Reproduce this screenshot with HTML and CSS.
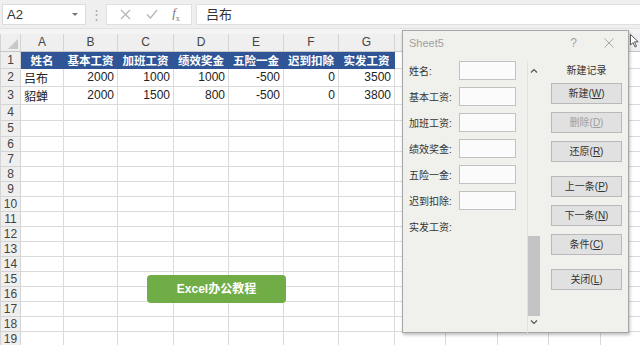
FILE: index.html
```html
<!DOCTYPE html>
<html>
<head>
<meta charset="utf-8">
<title>Sheet5</title>
<link rel="stylesheet" href="styles.css">
</head>
<body>

<div class="fbar">
  <div class="namebox"><span>A2</span><span class="caret"></span></div>
  <div class="grip">&#8942;</div>
  <div class="fxbox">
    <svg width="11" height="11" viewBox="0 0 11 11"><path d="M1 1L10 10M10 1L1 10" stroke="#b4b4b4" stroke-width="1.2" fill="none"/></svg>
    <svg width="12" height="10" viewBox="0 0 12 10"><path d="M1 5.5L4.5 9L11 1" stroke="#b4b4b4" stroke-width="1.2" fill="none"/></svg>
    <span class="fx"><i>f</i><sub>x</sub></span>
  </div>
  <div class="formula">吕布</div>
</div>
<div class="band"></div>

<table class="sheet">
  <colgroup>
    <col class="c-rh"><col class="c-a"><col class="c-b"><col class="c-c"><col class="c-d"><col class="c-e"><col class="c-f"><col class="c-g"><col class="c-h"><col class="c-i"><col class="c-j"><col class="c-k"><col class="c-l">
  </colgroup>
  <tr class="colhead">
    <th class="corner"><span class="tri"></span></th><th>A</th><th>B</th><th>C</th><th>D</th><th>E</th><th>F</th><th>G</th><th></th><th></th><th></th><th></th><th></th>
  </tr>
  <tr class="tall">
    <th>1</th><td class="hd">姓名</td><td class="hd">基本工资</td><td class="hd">加班工资</td><td class="hd">绩效奖金</td><td class="hd">五险一金</td><td class="hd">迟到扣除</td><td class="hd">实发工资</td><td></td><td></td><td></td><td></td><td></td>
  </tr>
  <tr class="tall">
    <th>2</th><td>吕布</td><td class="n">2000</td><td class="n">1000</td><td class="n">1000</td><td class="n">-500</td><td class="n">0</td><td class="n">3500</td><td></td><td></td><td></td><td></td><td></td>
  </tr>
  <tr class="tall">
    <th>3</th><td>貂蝉</td><td class="n">2000</td><td class="n">1500</td><td class="n">800</td><td class="n">-500</td><td class="n">0</td><td class="n">3800</td><td></td><td></td><td></td><td></td><td></td>
  </tr>
  <tr class="tall"><th>4</th><td></td><td></td><td></td><td></td><td></td><td></td><td></td><td></td><td></td><td></td><td></td><td></td></tr>
  <tr class="tall"><th>5</th><td></td><td></td><td></td><td></td><td></td><td></td><td></td><td></td><td></td><td></td><td></td><td></td></tr>
  <tr><th>6</th><td></td><td></td><td></td><td></td><td></td><td></td><td></td><td></td><td></td><td></td><td></td><td></td></tr>
  <tr><th>7</th><td></td><td></td><td></td><td></td><td></td><td></td><td></td><td></td><td></td><td></td><td></td><td></td></tr>
  <tr><th>8</th><td></td><td></td><td></td><td></td><td></td><td></td><td></td><td></td><td></td><td></td><td></td><td></td></tr>
  <tr><th>9</th><td></td><td></td><td></td><td></td><td></td><td></td><td></td><td></td><td></td><td></td><td></td><td></td></tr>
  <tr><th>10</th><td></td><td></td><td></td><td></td><td></td><td></td><td></td><td></td><td></td><td></td><td></td><td></td></tr>
  <tr><th>11</th><td></td><td></td><td></td><td></td><td></td><td></td><td></td><td></td><td></td><td></td><td></td><td></td></tr>
  <tr><th>12</th><td></td><td></td><td></td><td></td><td></td><td></td><td></td><td></td><td></td><td></td><td></td><td></td></tr>
  <tr><th>13</th><td></td><td></td><td></td><td></td><td></td><td></td><td></td><td></td><td></td><td></td><td></td><td></td></tr>
  <tr><th>14</th><td></td><td></td><td></td><td></td><td></td><td></td><td></td><td></td><td></td><td></td><td></td><td></td></tr>
  <tr><th>15</th><td></td><td></td><td></td><td></td><td></td><td></td><td></td><td></td><td></td><td></td><td></td><td></td></tr>
  <tr><th>16</th><td></td><td></td><td></td><td></td><td></td><td></td><td></td><td></td><td></td><td></td><td></td><td></td></tr>
  <tr><th>17</th><td></td><td></td><td></td><td></td><td></td><td></td><td></td><td></td><td></td><td></td><td></td><td></td></tr>
  <tr><th>18</th><td></td><td></td><td></td><td></td><td></td><td></td><td></td><td></td><td></td><td></td><td></td><td></td></tr>
  <tr><th>19</th><td></td><td></td><td></td><td></td><td></td><td></td><td></td><td></td><td></td><td></td><td></td><td></td></tr>
  <tr><th>20</th><td></td><td></td><td></td><td></td><td></td><td></td><td></td><td></td><td></td><td></td><td></td><td></td></tr>
</table>

<!-- floating things over the sheet -->
<div class="promo">Excel办公教程</div>

<div class="dialog">
  <div class="dlg-title">
    <span>Sheet5</span>
    <span class="help">?</span>
    <svg class="close" width="10" height="10" viewBox="0 0 10 10"><path d="M0.5 0.5L9.5 9.5M9.5 0.5L0.5 9.5" stroke="#a8a8a8" stroke-width="1" fill="none"/></svg>
  </div>
  <div class="dlg-body">
    <div class="fields">
      <div class="field"><label>姓名:</label><div class="input"></div></div>
      <div class="field"><label>基本工资:</label><div class="input"></div></div>
      <div class="field"><label>加班工资:</label><div class="input"></div></div>
      <div class="field"><label>绩效奖金:</label><div class="input"></div></div>
      <div class="field"><label>五险一金:</label><div class="input"></div></div>
      <div class="field"><label>迟到扣除:</label><div class="input"></div></div>
      <div class="field"><label>实发工资:</label></div>
    </div>
    <div class="scroll">
      <svg width="8" height="5" viewBox="0 0 8 5"><path d="M1 4.5L4 1.5L7 4.5" stroke="#555" stroke-width="1.2" fill="none"/></svg>
      <div class="thumb"></div>
      <svg width="8" height="5" viewBox="0 0 8 5"><path d="M1 0.5L4 3.5L7 0.5" stroke="#555" stroke-width="1.2" fill="none"/></svg>
    </div>
    <div class="buttons">
      <div class="rec">新建记录</div>
      <div class="btn">新建(<u>W</u>)</div>
      <div class="btn off">删除(<u>D</u>)</div>
      <div class="btn">还原(<u>R</u>)</div>
      <div class="btn wide">上一条(<u>P</u>)</div>
      <div class="btn">下一条(<u>N</u>)</div>
      <div class="btn">条件(<u>C</u>)</div>
      <div class="btn wide">关闭(<u>L</u>)</div>
    </div>
  </div>
</div>

<svg class="cursor" width="10" height="14" viewBox="0 0 10 14"><path d="M0.5 0.5L0.5 11L3 8.5L5 13L6.5 12.3L4.6 7.8L8.2 7.8Z" fill="#fff" stroke="#333" stroke-width="0.8"/></svg>

</body>
</html>
```

FILE: styles.css
```css
body {
  margin: 0;
  width: 640px;
  height: 345px;
  overflow: hidden;
  position: relative;
  background: #fff;
  font-family: "Liberation Sans", "Noto Sans CJK SC", sans-serif;
  font-size: 12px;
  color: #222;
}

/* formula bar */
.fbar {
  height: 28px;
  background: #efefef;
  display: flex;
  align-items: center;
  padding-left: 2px;
  box-sizing: border-box;
}

.namebox {
  width: 84px;
  height: 21px;
  background: #fff;
  border: 1px solid #dcdcdc;
  box-sizing: border-box;
  display: flex;
  align-items: center;
  justify-content: space-between;
  padding: 0 7px 0 4px;
  font-size: 13px;
  color: #333;
}

.caret {
  width: 0;
  height: 0;
  border-left: 3px solid transparent;
  border-right: 3px solid transparent;
  border-top: 3px solid #777;
}

.grip {
  width: 20px;
  text-align: center;
  color: #aaa;
  font-size: 13px;
}

.fxbox {
  width: 86px;
  height: 21px;
  background: #fff;
  border: 1px solid #e0e0e0;
  box-sizing: border-box;
  display: flex;
  align-items: center;
  justify-content: space-around;
  padding: 0 4px 0 6px;
}

.fx {
  font-family: "Liberation Serif", serif;
  font-size: 13px;
  color: #777;
}

.fx sub {
  font-size: 8px;
}

.formula {
  flex: 1;
  height: 21px;
  margin-left: 4px;
  background: #fff;
  border: 1px solid #e0e0e0;
  border-right: none;
  box-sizing: border-box;
  padding-left: 9px;
  line-height: 19px;
  font-size: 13px;
  color: #333;
}

.band {
  height: 5px;
  background: #f4f4f4;
  border-top: 1px solid #e2e2e2;
}

/* sheet grid */
.sheet {
  border-collapse: collapse;
  table-layout: fixed;
  width: 640px;
}

.c-rh { width: 20px; }
.c-a { width: 43px; }
.c-b { width: 54px; }
.c-c { width: 56px; }
.c-d { width: 55px; }
.c-e { width: 55px; }
.c-f { width: 55px; }
.c-g { width: 56px; }
.c-h { width: 51px; }
.c-i { width: 52px; }
.c-j { width: 51px; }
.c-k { width: 52px; }
.c-l { width: 40px; }

.sheet td, .sheet th {
  border: 1px solid #dadada;
  padding: 0 3px;
  white-space: nowrap;
  overflow: hidden;
}

.sheet tr {
  height: 14.75px;
}

.sheet tr.tall {
  height: 16px;
}

.sheet th {
  background: #efefef;
  color: #444;
  font-weight: normal;
  font-size: 12px;
  text-align: center;
  padding: 0;
  border-color: #d4d4d4;
}

.sheet tr.colhead {
  height: 17px;
}

.sheet tr.colhead th {
  border-top: none;
  border-bottom-color: #c6c6c6;
}

.corner {
  position: relative;
}

.tri {
  position: absolute;
  right: 2px;
  bottom: 2px;
  width: 0;
  height: 0;
  border-left: 10px solid transparent;
  border-bottom: 10px solid #c8c8c8;
}

.sheet td.hd {
  background: #2f5597;
  color: #fff;
  font-weight: bold;
  font-size: 11.5px;
  text-align: center;
  border-color: #2f5597;
}

.sheet td.n {
  text-align: right;
}

/* green label on the sheet */
.promo {
  position: absolute;
  left: 147px;
  top: 275px;
  width: 139px;
  height: 28px;
  background: #70ad47;
  border-radius: 4px;
  color: #fff;
  font-weight: bold;
  font-size: 12px;
  line-height: 28px;
  text-align: center;
}

/* data form dialog */
.dialog {
  position: absolute;
  left: 402px;
  top: 30px;
  width: 227px;
  height: 303px;
  box-sizing: border-box;
  background: #f0f0ec;
  border: 1px solid #a6a6a6;
  box-shadow: 1px 2px 3px rgba(0, 0, 0, 0.25);
  font-size: 10px;
  color: #333;
}

.dlg-title {
  height: 24px;
  display: flex;
  align-items: center;
  padding-left: 6px;
  font-size: 11px;
  color: #a0a0a0;
}

.dlg-title .help {
  margin-left: auto;
  margin-right: 27px;
  font-size: 12px;
}

.dlg-title .close {
  margin-right: 14px;
}

.dlg-body {
  display: flex;
  padding-top: 6px;
}

.fields {
  width: 118px;
  padding-left: 6px;
  display: flex;
  flex-direction: column;
  gap: 7px;
}

.field {
  height: 19px;
  display: flex;
  align-items: center;
}

.field label {
  width: 50px;
}

.input {
  width: 57px;
  height: 19px;
  box-sizing: border-box;
  background: #fbfbfb;
  border: 1px solid #c2c2c2;
}

.scroll {
  width: 13px;
  height: 272px;
  border-left: 1px solid #e2e2e0;
  display: flex;
  flex-direction: column;
  align-items: center;
  padding-top: 7px;
  box-sizing: border-box;
}

.thumb {
  width: 12px;
  height: 80px;
  margin-top: 163px;
  margin-bottom: 4px;
  background: #c3c3c3;
}

.buttons {
  margin-left: 11px;
  width: 71px;
  display: flex;
  flex-direction: column;
}

.rec {
  height: 19px;
  line-height: 19px;
  text-align: center;
  margin-bottom: 3px;
}

.btn {
  height: 21px;
  box-sizing: border-box;
  background: #e1e1e1;
  border: 1px solid #b9b9b9;
  text-align: center;
  line-height: 19px;
  margin-bottom: 8px;
}

.btn.wide {
  margin-top: 6px;
}

.btn.off {
  color: #a0a0a0;
}

.cursor {
  position: absolute;
  left: 630px;
  top: 34px;
}
```
